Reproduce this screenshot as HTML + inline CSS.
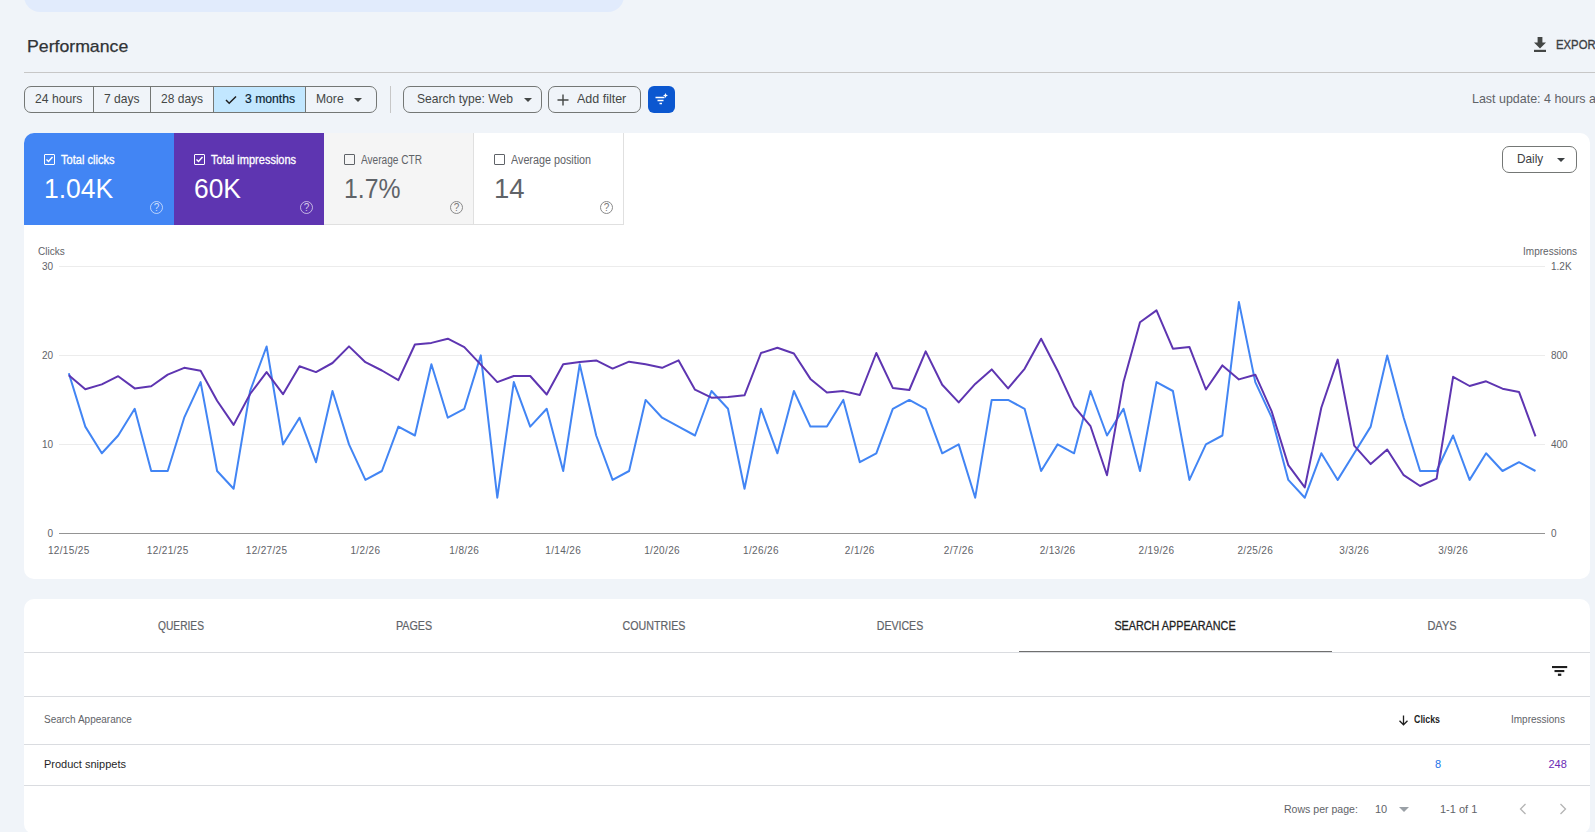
<!DOCTYPE html>
<html><head><meta charset="utf-8">
<style>
*{box-sizing:border-box;margin:0;padding:0}
html,body{width:1595px;height:832px;overflow:hidden;background:#f0f4f9;font-family:"Liberation Sans",sans-serif;color:#1f1f1f}
.abs{position:absolute}
.banner{position:absolute;left:24px;top:-20px;width:600px;height:32px;background:#e1ebfc;border-radius:18px}
.title{position:absolute;left:27px;top:37px;font-size:17px;color:#303336;-webkit-text-stroke:0.25px #303336;line-height:20px;transform:scaleX(1.04);transform-origin:0 0}
.sx{display:inline-block;transform-origin:0 50%;white-space:nowrap}
.hr{position:absolute;left:24px;top:72px;width:1571px;height:1px;background:#c7c7c7}
.seg{position:absolute;top:86px;height:27px;border:1px solid #747775;border-radius:7px;left:24px;width:353px;overflow:hidden;display:flex}
.seg div{height:25px;line-height:23px;font-size:13px;color:#444746;border-right:1px solid #747775;position:relative}
.seg div:last-child{border-right:none}
.btn{position:absolute;top:86px;height:27px;border:1px solid #747775;border-radius:7px;font-size:13px;color:#444746;line-height:23px}
.caret{position:absolute;width:0;height:0;border-left:4px solid transparent;border-right:4px solid transparent;border-top:4px solid #444746}
.card{position:absolute;background:#fff;border-radius:10px}
.mc{position:absolute;top:133px;width:150px;height:92px}
.mc .lbl{position:absolute;left:37px;top:152px;font-size:12px}
.cb{position:absolute;left:20px;top:21px;width:11px;height:11px;border:1.3px solid #fff;border-radius:1px}
.mlab{position:absolute;left:37px;top:19.5px;font-size:12px;line-height:14px;white-space:nowrap;transform-origin:0 0}
.mval{position:absolute;left:20px;top:40px;font-size:27.5px;line-height:32px;transform-origin:0 0;white-space:nowrap}
.q{position:absolute;left:126px;top:68px;width:13px;height:13px;border:1.2px solid;border-radius:50%;font-size:10px;line-height:11px;text-align:center}
.tab{position:absolute;top:619px;font-size:12px;line-height:14px;color:#5f6368;-webkit-text-stroke:0.2px #5f6368;white-space:nowrap;width:200px;margin-left:-100px;text-align:center}
</style></head><body>
<div class="banner"></div>
<div class="title">Performance</div>
<!-- export -->
<svg class="abs" style="left:1533px;top:37px" width="14" height="17" viewBox="0 0 14 17"><path d="M4.6 0h4.8v5.5h3.6L7 11.5 1 5.5h3.6z" fill="#444746"/><rect x="1" y="12.8" width="12" height="2.2" fill="#444746"/></svg>
<div class="abs" style="left:1556px;top:37px;font-size:13px;line-height:15px;color:#3c4043;-webkit-text-stroke:0.35px #3c4043;transform:scaleX(.87);transform-origin:0 0">EXPORT</div>
<div class="hr"></div>
<div class="seg">
 <div style="width:69px;padding-left:10px"><span class="sx" style="transform:scaleX(.935)">24 hours</span></div>
 <div style="width:57px;padding-left:10px"><span class="sx" style="transform:scaleX(.926)">7 days</span></div>
 <div style="width:63px;padding-left:10px"><span class="sx" style="transform:scaleX(.924)">28 days</span></div>
 <div style="width:92px;padding-left:31px;background:#c2e7ff;color:#0a1f33"><span class="sx" style="transform:scaleX(.936);-webkit-text-stroke:0.2px #0a1f33">3 months</span><svg class="abs" style="left:11px;top:8px" width="12" height="10" viewBox="0 0 12 10"><path d="M1 5l3.2 3.2L11 1.5" fill="none" stroke="#1f1f1f" stroke-width="1.5"/></svg></div>
 <div style="flex:1;padding-left:10px"><span class="sx" style="transform:scaleX(.934)">More</span><span class="caret" style="left:48px;top:11px"></span></div>
</div>
<div class="abs" style="left:390px;top:86px;width:1px;height:27px;background:#c7c7c7"></div>
<div class="btn" style="left:403px;width:139px;padding-left:13px"><span class="sx" style="transform:scaleX(.93)">Search type: Web</span><span class="caret" style="left:120px;top:11px"></span></div>
<div class="btn" style="left:548px;width:93px;padding-left:28px"><span class="sx" style="transform:scaleX(.96)">Add filter</span><svg class="abs" style="left:8px;top:7px" width="12" height="12" viewBox="0 0 12 12"><path d="M6 0.5v11M0.5 6h11" stroke="#444746" stroke-width="1.4"/></svg></div>
<div class="abs" style="left:648px;top:86px;width:27px;height:27px;background:#0b57d0;border-radius:6px">
 <svg class="abs" style="left:6px;top:6px" width="15" height="15" viewBox="0 0 15 15"><path d="M1.5 5.5h9M3.5 8.5h6M5.5 11.5h2.5" stroke="#fff" stroke-width="1.5"/><path d="M11.5 1l0.8 1.7 1.7 0.8-1.7 0.8-0.8 1.7-0.8-1.7-1.7-0.8 1.7-0.8z" fill="#fff"/></svg>
</div>
<div class="abs" style="left:1472px;top:91px;font-size:13px;line-height:15px;color:#5f6368;white-space:nowrap;transform:scaleX(.958);transform-origin:0 0">Last update: 4 hours ago</div>

<!-- chart card -->
<div class="card" style="left:24px;top:133px;width:1566px;height:446px"></div>
<div class="mc" style="left:24px;background:#4285f4;border-top-left-radius:10px;color:#fff">
 <div class="cb"><svg class="abs" style="left:0;top:0" width="9" height="9" viewBox="0 0 9 9"><path d="M1.5 4.5l2 2L7.5 2" fill="none" stroke="#fff" stroke-width="1.4"/></svg></div>
 <div class="mlab" style="transform:scaleX(.924);-webkit-text-stroke:0.3px #fff">Total clicks</div><div class="mval" style="transform:scaleX(.964)">1.04K</div><div class="q" style="border-color:rgba(255,255,255,.62);color:rgba(255,255,255,.75)">?</div>
</div>
<div class="mc" style="left:174px;background:#5e35b1;color:#fff">
 <div class="cb"><svg class="abs" style="left:0;top:0" width="9" height="9" viewBox="0 0 9 9"><path d="M1.5 4.5l2 2L7.5 2" fill="none" stroke="#fff" stroke-width="1.4"/></svg></div>
 <div class="mlab" style="transform:scaleX(.918);-webkit-text-stroke:0.3px #fff">Total impressions</div><div class="mval" style="transform:scaleX(.96)">60K</div><div class="q" style="border-color:rgba(255,255,255,.62);color:rgba(255,255,255,.75)">?</div>
</div>
<div class="mc" style="left:324px;background:#f5f5f5;color:#5f6368;border-right:1px solid #e0e0e0;border-bottom:1px solid #e0e0e0">
 <div class="cb" style="border-color:#5f6368"></div>
 <div class="mlab" style="transform:scaleX(.842)">Average CTR</div><div class="mval" style="transform:scaleX(.90)">1.7%</div><div class="q" style="border-color:#8a8a8a;color:#7a7a7a">?</div>
</div>
<div class="mc" style="left:474px;background:#fff;color:#5f6368;border-right:1px solid #e0e0e0;border-bottom:1px solid #e0e0e0">
 <div class="cb" style="border-color:#5f6368"></div>
 <div class="mlab" style="transform:scaleX(.898)">Average position</div><div class="mval">14</div><div class="q" style="border-color:#8a8a8a;color:#7a7a7a">?</div>
</div>
<div class="btn" style="left:1502px;top:146px;width:75px;height:27px;padding-left:14px;color:#3c4043"><span class="sx" style="transform:scaleX(.907)">Daily</span><span class="caret" style="left:54px;top:11px;border-top-color:#3c4043"></span></div>

<svg class="abs" style="left:0;top:0" width="1595" height="832" viewBox="0 0 1595 832">
 <g font-family="Liberation Sans" font-size="10" fill="#5f6368">
  <text x="38" y="255">Clicks</text>
  <text x="1577" y="255" text-anchor="end">Impressions</text>
  <text x="53" y="270" text-anchor="end">30</text>
  <text x="53" y="359" text-anchor="end">20</text>
  <text x="53" y="448" text-anchor="end">10</text>
  <text x="53" y="537" text-anchor="end">0</text>
  <text x="1551" y="270">1.2K</text>
  <text x="1551" y="359">800</text>
  <text x="1551" y="448">400</text>
  <text x="1551" y="537">0</text>
 </g>
 <g stroke="#ececec" stroke-width="1">
  <line x1="59" y1="266.5" x2="1545" y2="266.5"/>
  <line x1="59" y1="355.5" x2="1545" y2="355.5"/>
  <line x1="59" y1="444.5" x2="1545" y2="444.5"/>
 </g>
 <line x1="59" y1="533.5" x2="1545" y2="533.5" stroke="#949494" stroke-width="1"/>
 <g font-family="Liberation Sans" font-size="10" fill="#5f6368" text-anchor="middle" letter-spacing="0.35">
  <text x="68.8" y="554">12/15/25</text>
  <text x="167.7" y="554">12/21/25</text>
  <text x="266.6" y="554">12/27/25</text>
  <text x="365.4" y="554">1/2/26</text>
  <text x="464.3" y="554">1/8/26</text>
  <text x="563.2" y="554">1/14/26</text>
  <text x="662.1" y="554">1/20/26</text>
  <text x="761.0" y="554">1/26/26</text>
  <text x="859.8" y="554">2/1/26</text>
  <text x="958.7" y="554">2/7/26</text>
  <text x="1057.6" y="554">2/13/26</text>
  <text x="1156.5" y="554">2/19/26</text>
  <text x="1255.3" y="554">2/25/26</text>
  <text x="1354.2" y="554">3/3/26</text>
  <text x="1453.1" y="554">3/9/26</text>
 </g>
 <polyline points="68.8,373.2 85.3,426.6 101.8,453.3 118.2,435.5 134.7,408.8 151.2,471.0 167.7,471.0 184.2,417.7 200.6,382.1 217.1,471.0 233.6,488.8 250.1,391.0 266.6,346.5 283.0,444.4 299.5,417.7 316.0,462.2 332.5,391.0 349.0,444.4 365.4,479.9 381.9,471.0 398.4,426.6 414.9,435.5 431.4,364.3 447.8,417.7 464.3,408.8 480.8,355.4 497.3,497.7 513.8,382.1 530.2,426.6 546.7,408.8 563.2,471.0 579.7,364.3 596.2,435.5 612.6,479.9 629.1,471.0 645.6,399.9 662.1,417.7 678.6,426.6 695.0,435.5 711.5,391.0 728.0,408.8 744.5,488.8 761.0,408.8 777.4,453.3 793.9,391.0 810.4,426.6 826.9,426.6 843.3,399.9 859.8,462.2 876.3,453.3 892.8,408.8 909.3,399.9 925.7,408.8 942.2,453.3 958.7,444.4 975.2,497.7 991.7,399.9 1008.1,399.9 1024.6,408.8 1041.1,471.0 1057.6,444.4 1074.1,453.3 1090.5,391.0 1107.0,435.5 1123.5,408.8 1140.0,471.0 1156.5,382.1 1172.9,391.0 1189.4,479.9 1205.9,444.4 1222.4,435.5 1238.9,302.1 1255.3,382.1 1271.8,417.7 1288.3,479.9 1304.8,497.7 1321.3,453.3 1337.7,479.9 1354.2,453.3 1370.7,426.6 1387.2,355.4 1403.7,417.7 1420.1,471.0 1436.6,471.0 1453.1,435.5 1469.6,479.9 1486.1,453.3 1502.5,471.0 1519.0,462.2 1535.5,471.0" fill="none" stroke="#4285f4" stroke-width="2" stroke-linejoin="round"/>
 <polyline points="68.8,375.2 85.3,389.2 101.8,384.4 118.2,376.2 134.7,388.4 151.2,386.3 167.7,374.6 184.2,367.8 200.6,370.7 217.1,400.8 233.6,424.9 250.1,394.0 266.6,372.1 283.0,394.2 299.5,366.3 316.0,372.1 332.5,363.0 349.0,346.4 365.4,362.2 381.9,370.5 398.4,380.1 414.9,344.5 431.4,342.9 447.8,338.7 464.3,347.1 480.8,364.6 497.3,382.1 513.8,376.0 530.2,376.0 546.7,394.5 563.2,364.3 579.7,362.0 596.2,360.4 612.6,368.6 629.1,361.7 645.6,364.3 662.1,367.8 678.6,360.4 695.0,389.7 711.5,397.7 728.0,396.9 744.5,395.3 761.0,353.0 777.4,347.7 793.9,353.5 810.4,378.9 826.9,392.6 843.3,391.1 859.8,395.0 876.3,353.0 892.8,387.9 909.3,390.0 925.7,351.4 942.2,384.7 958.7,402.4 975.2,383.9 991.7,369.4 1008.1,388.4 1024.6,368.8 1041.1,338.7 1057.6,370.7 1074.1,406.4 1090.5,426.2 1107.0,475.2 1123.5,382.1 1140.0,322.3 1156.5,310.4 1172.9,348.7 1189.4,346.9 1205.9,389.5 1222.4,365.4 1238.9,379.4 1255.3,374.7 1271.8,411.7 1288.3,465.1 1304.8,487.4 1321.3,407.7 1337.7,359.6 1354.2,445.6 1370.7,464.1 1387.2,449.5 1403.7,475.2 1420.1,486.0 1436.6,478.6 1453.1,376.8 1469.6,386.0 1486.1,381.3 1502.5,388.7 1519.0,391.9 1535.5,436.3" fill="none" stroke="#5e35b1" stroke-width="2" stroke-linejoin="round"/>
</svg>

<!-- table card -->
<div class="card" style="left:24px;top:599px;width:1566px;height:235px"></div>
<div class="tab" style="left:181.3px;transform:scaleX(.852)">QUERIES</div>
<div class="tab" style="left:413.5px;transform:scaleX(.895)">PAGES</div>
<div class="tab" style="left:654.2px;transform:scaleX(.889)">COUNTRIES</div>
<div class="tab" style="left:900px;transform:scaleX(.883)">DEVICES</div>
<div class="tab" style="left:1175.4px;color:#1f1f1f;transform:scaleX(.9);-webkit-text-stroke:0.3px #1f1f1f">SEARCH APPEARANCE</div>
<div class="tab" style="left:1442.4px;transform:scaleX(.916)">DAYS</div>
<div class="abs" style="left:24px;top:652px;width:1566px;height:1px;background:#dadce0"></div>
<div class="abs" style="left:1019px;top:651px;width:313px;height:1px;background:#6f6f6f"></div>
<svg class="abs" style="left:1550px;top:664px" width="18" height="14" viewBox="0 0 18 14"><rect x="2" y="2" width="15.2" height="2.1" fill="#1f1f1f"/><rect x="4.5" y="6" width="9.8" height="2.1" fill="#1f1f1f"/><rect x="7.9" y="9.6" width="3.4" height="2.3" fill="#1f1f1f"/></svg>
<div class="abs" style="left:24px;top:696px;width:1566px;height:1px;background:#dadce0"></div>
<div class="abs" style="left:44px;top:714px;font-size:10px;line-height:12px;color:#5f6368">Search Appearance</div>
<svg class="abs" style="left:1398px;top:715px" width="11" height="11" viewBox="0 0 11 11"><path d="M5.5 0.5v9M1.5 5.8l4 4 4-4" fill="none" stroke="#1f1f1f" stroke-width="1.3"/></svg>
<div class="abs" style="left:1414px;top:714px;font-size:10px;line-height:12px;color:#1f1f1f;font-weight:bold;transform:scaleX(.883);transform-origin:0 0">Clicks</div>
<div class="abs" style="left:1511px;top:714px;font-size:10px;line-height:12px;color:#5f6368">Impressions</div>
<div class="abs" style="left:24px;top:744px;width:1566px;height:1px;background:#dadce0"></div>
<div class="abs" style="left:44px;top:757px;font-size:11px;line-height:14px;color:#1f1f1f">Product snippets</div>
<div class="abs" style="left:1435px;top:757px;font-size:11px;line-height:14px;color:#1a73e8">8</div>
<div class="abs" style="left:1548.5px;top:757px;font-size:11px;line-height:14px;color:#6a2bb5">248</div>
<div class="abs" style="left:24px;top:785px;width:1566px;height:1px;background:#dadce0"></div>
<div class="abs" style="left:1284px;top:802px;font-size:11px;line-height:14px;color:#5f6368;transform:scaleX(.958);transform-origin:0 0">Rows per page:</div>
<div class="abs" style="left:1375px;top:802px;font-size:11px;line-height:14px;color:#5f6368">10</div>
<span class="caret" style="left:1399px;top:807px;border-top-color:#9aa0a6;border-left-width:5px;border-right-width:5px;border-top-width:5px"></span>
<div class="abs" style="left:1440px;top:802px;font-size:11px;line-height:14px;color:#5f6368">1-1 of 1</div>
<svg class="abs" style="left:1518px;top:803px" width="10" height="12" viewBox="0 0 10 12"><path d="M7.5 1L2.5 6l5 5" fill="none" stroke="#b4b4b4" stroke-width="1.3"/></svg>
<svg class="abs" style="left:1558px;top:803px" width="10" height="12" viewBox="0 0 10 12"><path d="M2.5 1l5 5-5 5" fill="none" stroke="#b4b4b4" stroke-width="1.3"/></svg>
</body></html>
